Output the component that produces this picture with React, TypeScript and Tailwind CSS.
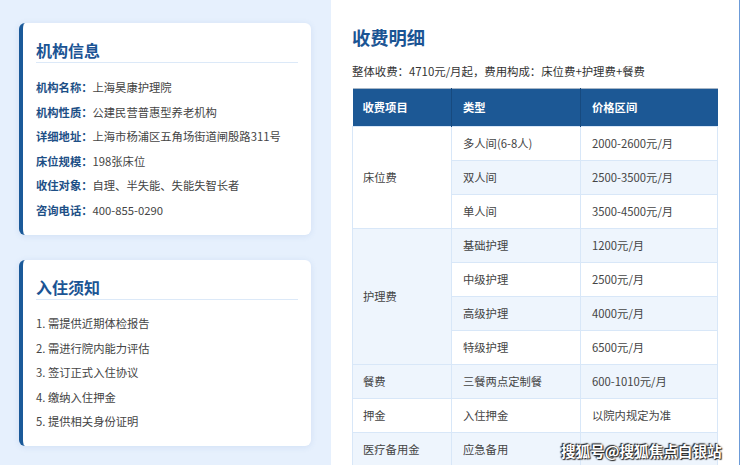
import React from "react";

const font = { fontFamily: '"Noto Sans CJK SC", "Noto Sans", sans-serif' };

const info: [string, string][] = [
  ["机构名称：", "上海昊康护理院"],
  ["机构性质：", "公建民营普惠型养老机构"],
  ["详细地址：", "上海市杨浦区五角场街道闸殷路311号"],
  ["床位规模：", "198张床位"],
  ["收住对象：", "自理、半失能、失能失智长者"],
  ["咨询电话：", "400-855-0290"],
];

const notes = [
  "1. 需提供近期体检报告",
  "2. 需进行院内能力评估",
  "3. 签订正式入住协议",
  "4. 缴纳入住押金",
  "5. 提供相关身份证明",
];

type Row = { item?: string; span?: number; type: string; price: string };
const rows: Row[] = [
  { item: "床位费", span: 3, type: "多人间(6-8人)", price: "2000-2600元/月" },
  { type: "双人间", price: "2500-3500元/月" },
  { type: "单人间", price: "3500-4500元/月" },
  { item: "护理费", span: 4, type: "基础护理", price: "1200元/月" },
  { type: "中级护理", price: "2500元/月" },
  { type: "高级护理", price: "4000元/月" },
  { type: "特级护理", price: "6500元/月" },
  { item: "餐费", span: 1, type: "三餐两点定制餐", price: "600-1010元/月" },
  { item: "押金", span: 1, type: "入住押金", price: "以院内规定为准" },
  { item: "医疗备用金", span: 1, type: "应急备用", price: "" },
];

function Card({ title, children, className }: { title: string; children: React.ReactNode; className?: string }) {
  return (
    <div
      className={
        "bg-white rounded-[6px] border-l-4 border-[#1b5a99] px-[13px] pt-[16px] pb-[15px] shadow-[0_1px_6px_rgba(60,110,180,0.12)] " +
        (className ?? "")
      }
    >
      <div className="text-[16px] leading-[22px] font-bold text-[#1b5494] pb-[1px] border-b border-[#dce9f8]">{title}</div>
      {children}
    </div>
  );
}

export default function App() {
  return (
    <div className="relative w-[740px] h-[465px] overflow-hidden flex" style={font}>
      <div className="w-[331px] shrink-0 bg-[#e6f0fd] pt-[23px] pl-[19px] pr-[20px]">
        <Card title="机构信息">
          <div className="mt-[14px] flex flex-col gap-[4.6px] text-[11.3px] leading-[20px]">
            {info.map(([k, v]) => (
              <div key={k} className="flex whitespace-nowrap">
                <span className="font-bold text-[#1d4f86]">{k}</span>
                <span className="text-[#444]">{v}</span>
              </div>
            ))}
          </div>
        </Card>
        <Card title="入住须知" className="mt-[25px]">
          <div className="mt-[13px] flex flex-col gap-[4.6px] text-[11.3px] leading-[20px] text-[#444]">
            {notes.map((n) => (
              <div key={n}>{n}</div>
            ))}
          </div>
        </Card>
      </div>
      <div className="flex-1 bg-white pl-[21px] pr-[21px] pt-[23px] border-r-2 border-[#6c9bd8]">
        <div className="text-[18.3px] leading-[28px] font-bold text-[#1b5494]">收费明细</div>
        <div className="mt-[10px] text-[11.4px] leading-[20px] text-[#333]">
          整体收费：4710元/月起，费用构成：床位费+护理费+餐费
        </div>
        <table className="mt-[7px] w-[365px] border-collapse text-[11.3px] text-[#444] table-fixed">
          <colgroup>
            <col className="w-[99px]" />
            <col className="w-[129px]" />
            <col className="w-[137px]" />
          </colgroup>
          <thead>
            <tr className="h-[38px] bg-[#1c5895] text-white font-bold text-left border-t border-[#a7b6c6]">
              <th className="px-[10px] border-r border-[#174a7f]">收费项目</th>
              <th className="px-[11px] border-r border-[#174a7f]">类型</th>
              <th className="px-[11px]">价格区间</th>
            </tr>
          </thead>
          <tbody>
            {rows.map((r, i) => (
              <tr key={i} className={"h-[34px] " + (i % 2 === 1 ? "bg-[#eef5fd]" : "bg-white")}>
                {r.item && (
                  <td rowSpan={r.span} className="px-[10px] border border-[#d8e7f8] align-middle">
                    {r.item}
                  </td>
                )}
                <td className="px-[11px] border border-[#d8e7f8] whitespace-nowrap">{r.type}</td>
                <td className="px-[11px] border border-[#d8e7f8] whitespace-nowrap">{r.price}</td>
              </tr>
            ))}
          </tbody>
        </table>
      </div>
      <div
        className="absolute left-[561px] top-[440px] text-[14.6px] leading-[22px] font-bold text-white whitespace-nowrap"
        style={{ textShadow: "0 0 2px #222, 1px 1px 1px #222, -1px -1px 1px #222" }}
      >
        搜狐号@搜狐焦点白银站
      </div>
    </div>
  );
}
